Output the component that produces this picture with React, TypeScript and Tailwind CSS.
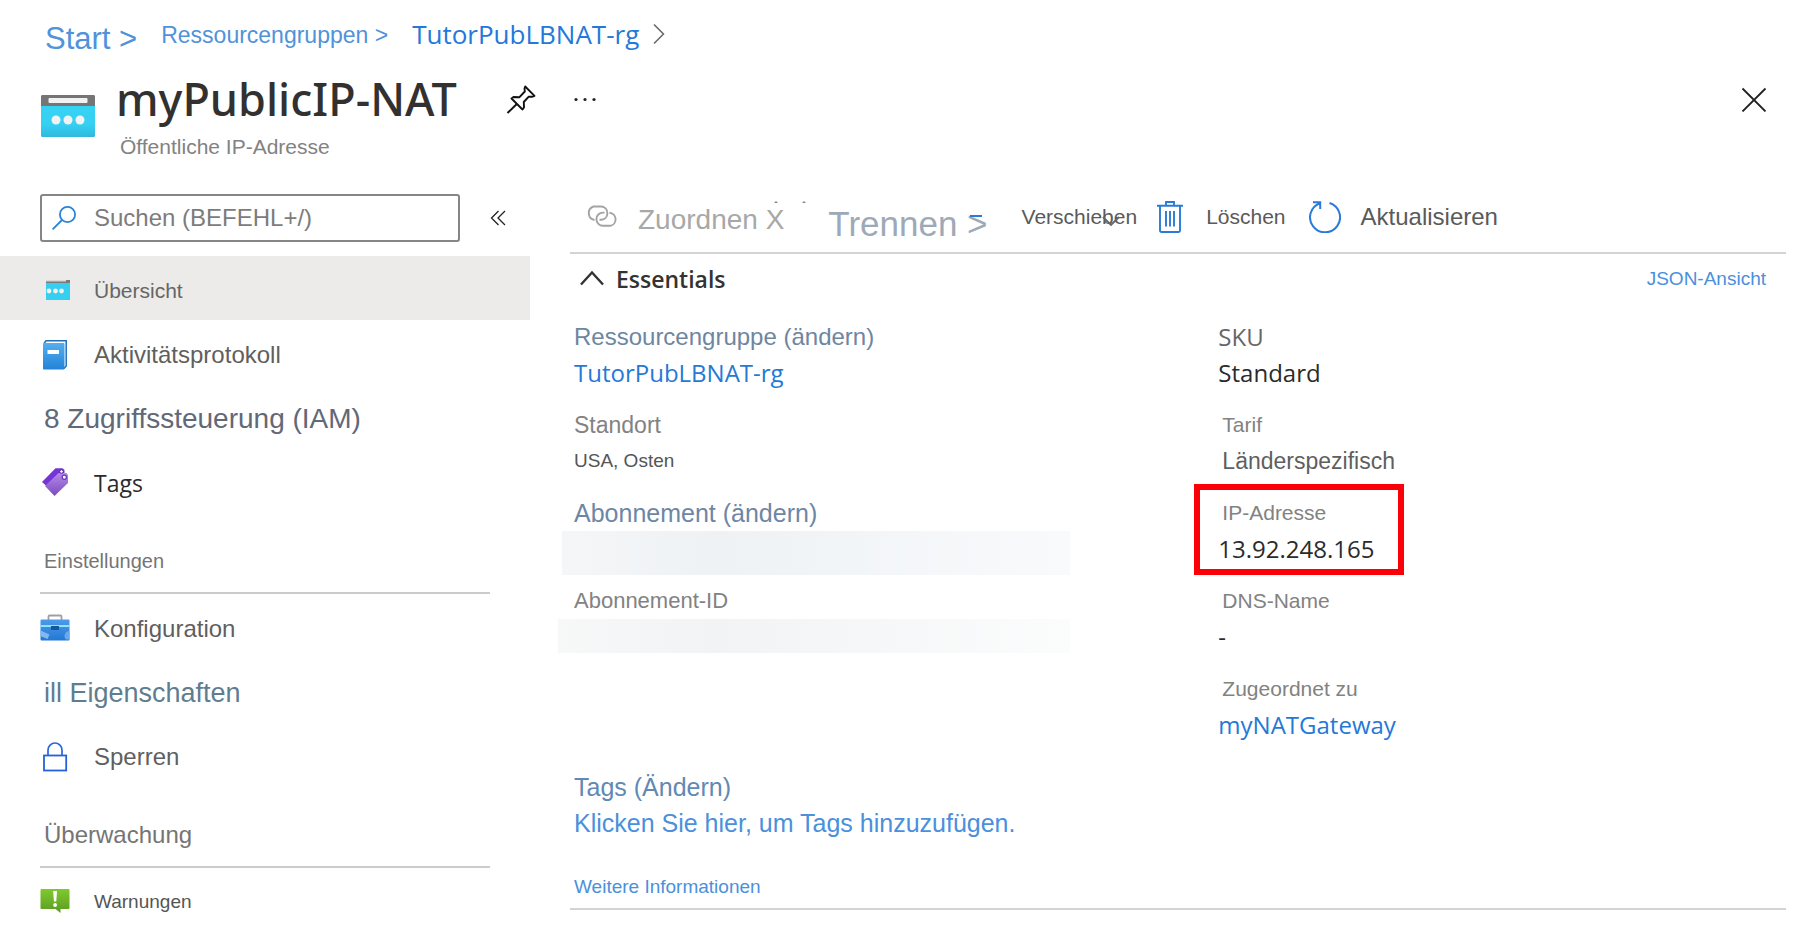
import React from "react";

const segoe = "font-['Open_Sans','Noto_Sans',sans-serif] font-medium";

function IpIcon({ className, viewBox }: { className: string; viewBox: string }) {
  return (
    <svg className={className} viewBox={viewBox} aria-hidden="true">
      <defs>
        <linearGradient id="ipBody" x1="0" y1="0" x2="0" y2="1">
          <stop offset="0" stopColor="#37d4f6" />
          <stop offset="0.7" stopColor="#35d0f2" />
          <stop offset="1" stopColor="#2fb9dc" />
        </linearGradient>
      </defs>
      <rect x="0" y="0" width="54" height="42" rx="1.5" fill="url(#ipBody)" />
      <path d="M1.5 0h51a1.5 1.5 0 0 1 1.5 1.5V11H0V1.500A1.500 1.500 0 0 1 1.500 0z" fill="#757575" />
      <rect x="7.500" y="3" width="39" height="5" rx="1" fill="#f2f2f2" />
      <circle cx="15" cy="25" r="4.500" fill="#f2f2f2" />
      <circle cx="27" cy="25" r="4.500" fill="#f2f2f2" />
      <circle cx="39" cy="25" r="4.500" fill="#f2f2f2" />
    </svg>
  );
}

function OverviewIcon() {
  return (
    <svg className="size-[30px]" viewBox="0 0 30 30" aria-hidden="true">
      <rect x="6" y="4" width="24" height="20" fill="#35cff1" />
      <rect x="6" y="4" width="24" height="3" fill="#7a7a7a" />
      <rect x="6" y="4" width="20" height="1.500" fill="#d9d9d9" />
      <circle cx="9" cy="15" r="2.400" fill="#f2f2f2" />
      <circle cx="15.500" cy="15" r="2.400" fill="#f2f2f2" />
      <circle cx="21.500" cy="15" r="2.400" fill="#f2f2f2" />
    </svg>
  );
}

function BookIcon() {
  return (
    <svg className="size-[30px]" viewBox="0 1 30 30" aria-hidden="true">
      <defs>
        <linearGradient id="book" x1="0" y1="0" x2="0" y2="1">
          <stop offset="0" stopColor="#54aef0" />
          <stop offset="1" stopColor="#2283d8" />
        </linearGradient>
      </defs>
      <path d="M4 4.500L6 1.800H26.200V27L24 29.500" fill="#ffffff" stroke="#1f6fb8" strokeWidth="1.500" />
      <rect x="3" y="4" width="21.500" height="26.500" rx="1" fill="url(#book)" />
      <rect x="7.500" y="11" width="11.500" height="4" fill="#ffffff" />
    </svg>
  );
}

function TagIcon() {
  return (
    <svg className="size-[30px]" viewBox="0 1 30 30" aria-hidden="true">
      <defs>
        <linearGradient id="tag" x1="0" y1="0" x2="0" y2="1">
          <stop offset="0" stopColor="#b58ae6" />
          <stop offset="1" stopColor="#7a4bc0" />
        </linearGradient>
      </defs>
      <path d="M2 15L15.500 1.200H22.500L24.500 3V8L7 19.500z" fill="#7534d6" />
      <path d="M5 19L18.500 6H26.500L28 8V16L14.500 29z" fill="url(#tag)" />
      <circle cx="21.500" cy="4.500" r="1.800" fill="#ffffff" stroke="#4c1fa0" strokeWidth="1" />
      <circle cx="24.300" cy="10.300" r="2.100" fill="#ffffff" stroke="#6a35c0" strokeWidth="1.300" />
    </svg>
  );
}

function ToolboxIcon() {
  return (
    <svg className="size-[30px]" viewBox="0 1 30 30" aria-hidden="true">
      <defs>
        <linearGradient id="toolbox" x1="0" y1="0" x2="0" y2="1">
          <stop offset="0" stopColor="#4c9bec" />
          <stop offset="1" stopColor="#2478d2" />
        </linearGradient>
      </defs>
      <path d="M8.500 7V3.500a1 1 0 0 1 1-1h11a1 1 0 0 1 1 1V7" fill="none" stroke="#a0a0a0" strokeWidth="1.800" />
      <rect x="0.500" y="6.500" width="29" height="21" rx="1" fill="url(#toolbox)" />
      <rect x="0.500" y="12" width="29" height="2" fill="#8fe3fa" />
      <rect x="11" y="13" width="8" height="4" fill="#17559c" />
      <path d="M0.500 17.500L9.500 21.500L7.500 26L0.500 23z" fill="#83b9f2" />
      <path d="M29.500 18A5 5 0 0 0 26 26.500H29.500z" fill="#6aa9ee" />
    </svg>
  );
}

function LockIcon() {
  return (
    <svg className="size-[30px]" viewBox="0 1 30 30" aria-hidden="true">
      <path d="M8 15V9a7 7 0 0 1 14 0V15" fill="none" stroke="#2a66dc" strokeWidth="1.700" />
      <rect x="4" y="14.500" width="22.200" height="15" fill="#ffffff" stroke="#2462da" strokeWidth="1.800" />
    </svg>
  );
}

function AlertIcon() {
  return (
    <svg className="size-[30px]" viewBox="0 0 30 30" aria-hidden="true">
      <defs>
        <linearGradient id="alert" x1="0" y1="0" x2="0" y2="1">
          <stop offset="0" stopColor="#7ecb2c" />
          <stop offset="1" stopColor="#5b9a24" />
        </linearGradient>
      </defs>
      <path d="M1.500 2H28.500a1 1 0 0 1 1 1V21a1 1 0 0 1-1 1H20.500V26L15.500 22H1.500a1 1 0 0 1-1-1V3a1 1 0 0 1 1-1z" fill="url(#alert)" />
      <path d="M13.200 4H17L16.300 14.500H13.900z" fill="#ffffff" />
      <circle cx="15.100" cy="18" r="1.900" fill="#ffffff" />
    </svg>
  );
}

type NavItem = { label: string; icon?: React.ReactNode; text: string; selected?: boolean; row?: string };

function NavRow({ item }: { item: NavItem }) {
  return (
    <li>
      <a
        href="#"
        aria-current={item.selected ? "page" : undefined}
        className={`flex items-center gap-6 ${item.row ?? "h-16 pt-1.5"} ${item.icon ? "pl-10" : "pl-11"} ${item.selected ? "bg-[#ecebe9]" : ""}`}
      >
        {item.icon}
        <span className={`whitespace-nowrap ${item.text}`}>{item.label}</span>
      </a>
    </li>
  );
}

function NavHeading({ children, text }: { children: string; text: string }) {
  return (
    <h2 className={`ml-10 mr-10 flex h-[82px] items-end border-b-2 border-[#cbcbcb] pb-[17px] pl-1 leading-7 text-[#757575] ${text}`}>
      {children}
    </h2>
  );
}

const general: NavItem[] = [
  { label: "Übersicht", icon: <OverviewIcon />, text: "text-[21px] text-[#666]", selected: true },
  { label: "Aktivitätsprotokoll", icon: <BookIcon />, text: "text-[24px] text-[#5f5f5f]" },
  { label: "8 Zugriffssteuerung (IAM)", text: "text-[28px] text-[#626878]" },
  { label: "Tags", icon: <TagIcon />, text: `text-[23px] text-[#2b2b2b] ${segoe}` },
];
const settings: NavItem[] = [
  { label: "Konfiguration", icon: <ToolboxIcon />, text: "text-[24px] text-[#5f5f5f]" },
  { label: "ill Eigenschaften", text: "text-[27px] text-[#5f7d8f]" },
  { label: "Sperren", icon: <LockIcon />, text: "text-[24px] text-[#5f5f5f]" },
];
const monitoring: NavItem[] = [
  { label: "Warnungen", icon: <AlertIcon />, text: "text-[19px] text-[#555]", row: "h-14 pt-3" },
];

function Sidebar() {
  return (
    <aside className="w-[530px] shrink-0">
      <div className="flex items-center pl-10">
        <div className="relative">
          <svg className="absolute left-3 top-3 size-6" viewBox="0 0 24 24" fill="none" stroke="#2b83d8" strokeWidth="1.800" aria-hidden="true">
            <circle cx="15.500" cy="8.500" r="7.600" />
            <path d="M10 14L0.600 23.400" />
          </svg>
          <input
            type="search"
            aria-label="Suchen"
            placeholder="Suchen (BEFEHL+/)"
            className="h-12 w-[420px] rounded-[3px] border-2 border-[#868686] pl-[52px] pr-3 text-[24px] text-[#333] outline-none placeholder:text-[#7c7c7c]"
          />
        </div>
        <button type="button" aria-label="Menü einklappen" className="ml-7">
          <svg className="size-5" viewBox="0 0 20 20" fill="none" stroke="#222" strokeWidth="1.300" aria-hidden="true">
            <path d="M10.500 3L3.500 10L10.500 17M17 3L10 10L17 17" />
          </svg>
        </button>
      </div>
      <nav className="mt-[14px]">
        <ul>{general.map((i) => <NavRow key={i.label} item={i} />)}</ul>
        <NavHeading text="text-[20px]">Einstellungen</NavHeading>
        <ul>{settings.map((i) => <NavRow key={i.label} item={i} />)}</ul>
        <NavHeading text="text-[24px]">Überwachung</NavHeading>
        <ul>{monitoring.map((i) => <NavRow key={i.label} item={i} />)}</ul>
      </nav>
    </aside>
  );
}

function Toolbar() {
  return (
    <div role="toolbar" className="flex h-[60px] items-start whitespace-nowrap border-b-2 border-[#d4d4d4] pl-4 pt-[7px] leading-8 text-[#5a5a5a]">
      <button type="button" className="relative flex items-start gap-5 text-[28px] leading-[38px] text-[#a8a8a8]">
        <svg className="h-8 w-8" viewBox="0 0 32 32" fill="none" stroke="#a3a3a3" strokeWidth="1.900" aria-hidden="true">
          <path d="M8.500 19A7 7 0 0 1 7.500 5.500H15.500A6.700 6.700 0 0 1 15.500 18.800H13.500" />
          <path d="M23.500 11.800A6.600 6.600 0 0 1 24.500 24.800H17A6.600 6.600 0 0 1 17 11.600H18.500" />
        </svg>
        Zuordnen X
        <svg className="absolute left-[188px] top-0 h-1 w-8" viewBox="0 0 32 4" fill="#8a8a8a" aria-hidden="true">
          <path d="M0 2L2 0L4 2zM28 2L30 0L32 2z" />
        </svg>
      </button>
      <button type="button" className="relative ml-11 text-[35px] leading-[46px] text-[#9ea9b8]">
        Trennen &gt;
        <span className="absolute right-1.5 top-[14px] h-0.5 w-3 bg-[#2b7bd6]" />
      </button>
      <button type="button" className="relative ml-[34px] text-[21px]">
        Verschieben
        <svg className="absolute left-20 top-[14px] h-3 w-[18px]" viewBox="0 0 18 12" fill="none" stroke="#666" strokeWidth="1.800" aria-hidden="true">
          <path d="M1 2L9 10L17 2" />
        </svg>
      </button>
      <button type="button" className="ml-5 flex items-start gap-[23px] text-[21px]">
        <svg className="h-8 w-[26px]" viewBox="0 0 26 32" fill="none" stroke="#2b7bd6" strokeWidth="1.900" aria-hidden="true">
          <path d="M0 4.800H26M3 4.800V29.500a1.500 1.500 0 0 0 1.500 1.500H21.500a1.500 1.500 0 0 0 1.500-1.500V4.800M9 4.500V1H17V4.500M9 10V25.500M13 10V25.500M17 10V25.500" />
        </svg>
        Löschen
      </button>
      <button type="button" className="ml-[23px] flex items-start gap-5 text-[24px]">
        <svg className="size-8" viewBox="0 0 32 32" fill="none" stroke="#2b7bd6" strokeWidth="2" aria-hidden="true">
          <path d="M20.500 2A15 15 0 1 1 11 2.200M4 1.200H11.200V8" />
        </svg>
        Aktualisieren
      </button>
    </div>
  );
}

const label = "block pl-1 text-[21px] text-[#828282]";

function Field({ children }: { children: React.ReactNode }) {
  return <div className="relative h-[88px] whitespace-nowrap leading-9">{children}</div>;
}

function Essentials() {
  return (
    <section>
      <div className="flex items-center justify-between pl-[10px] pr-5 pt-[9px] leading-8">
        <button type="button" aria-expanded="true" className="flex items-center gap-3 font-['Open_Sans','Noto_Sans',sans-serif] text-[23px] font-semibold text-[#333]">
          <svg className="h-5 w-6" viewBox="0 0 24 20" fill="none" stroke="#333" strokeWidth="2.400" aria-hidden="true">
            <path d="M1 15.500L12 3.500L23 15.500" />
          </svg>
          Essentials
        </button>
        <a href="#" className="text-[19px] text-[#4a90dc]">JSON-Ansicht</a>
      </div>

      <div className="mt-6 grid grid-cols-[53fr_47fr] pl-1">
        <dl>
          <Field>
            <dt className="text-[24px] text-[#6e869f]">Ressourcengruppe (<a href="#">ändern</a>)</dt>
            <dd><a href="#" className={`text-[24px] text-[#2479d8] ${segoe}`}>TutorPubLBNAT-rg</a></dd>
          </Field>
          <Field>
            <dt className="text-[23px] text-[#828282]">Standort</dt>
            <dd className="text-[19px] text-[#555]">USA, Osten</dd>
          </Field>
          <Field>
            <dt className="text-[25px] text-[#6e86a5]">Abonnement (<a href="#">ändern</a>)</dt>
            <dd className="-ml-3 h-11 w-[508px] bg-linear-to-r from-[#f5f6f7] via-[#eef2f5] via-30% to-[#f9fafc]" />
          </Field>
          <Field>
            <dt className="text-[22px] text-[#828282]">Abonnement-ID</dt>
            <dd className="-ml-4 h-[34px] w-[512px] bg-linear-to-r from-[#f7f8f8] via-[#f2f3f5] via-30% to-[#fbfcfc]" />
          </Field>
        </dl>
        <dl className="pl-0.5 text-[24px]">
          <Field>
            <dt className="font-['Open_Sans','Noto_Sans',sans-serif] text-[#666]">SKU</dt>
            <dd className={`text-[#2b2b2b] ${segoe}`}>Standard</dd>
          </Field>
          <Field>
            <dt className={label}>Tarif</dt>
            <dd className="pl-1 text-[23px] text-[#5f5f5f]">Länderspezifisch</dd>
          </Field>
          <Field>
            <span className="absolute -left-6 -top-[11px] h-[91px] w-[210px] border-[6px] border-[#fb0007]" />
            <dt className={label}>IP-Adresse</dt>
            <dd className={`text-[#2b2b2b] ${segoe}`}>13.92.248.165</dd>
          </Field>
          <Field>
            <dt className={label}>DNS-Name</dt>
            <dd className={`text-[#2b2b2b] ${segoe}`}>-</dd>
          </Field>
          <Field>
            <dt className={label}>Zugeordnet zu</dt>
            <dd><a href="#" className={`text-[#2479d8] ${segoe}`}>myNATGateway</a></dd>
          </Field>
        </dl>
      </div>

      <div className="border-b-2 border-[#d4d4d4] pb-[3px] pl-1 pt-[10px] text-[25px] leading-9">
        <p className="text-[#6089b3]">Tags (<a href="#">Ändern</a>)</p>
        <p><a href="#" className="text-[#4a90dc]">Klicken Sie hier, um Tags hinzuzufügen.</a></p>
        <p className="mt-7 text-[19px]"><a href="#" className="text-[#4a90dc]">Weitere Informationen</a></p>
      </div>
    </section>
  );
}

export default function App() {
  return (
    <div className="bg-white font-['Liberation_Sans',Arial,sans-serif]">
      <nav aria-label="Breadcrumb" className="flex items-start gap-6 whitespace-nowrap pl-[45px] pt-[18px] leading-8 text-[#4f93da]">
        <a href="#" className="text-[31px] leading-[42px]">Start &gt;</a>
        <a href="#" className="text-[23px] leading-[34px]">Ressourcengruppen &gt;</a>
        <div className="flex items-center gap-3.5">
          <a href="#" className={`text-[26px] text-[#2479d8] ${segoe}`}>TutorPubLBNAT-rg</a>
          <svg className="h-5 w-3" viewBox="0 0 12 20" fill="none" stroke="#666" strokeWidth="1.500" aria-hidden="true">
            <path d="M1 0.500L10.500 10L1 19.500" />
          </svg>
        </div>
      </nav>

      <header className="mt-[11px] flex items-start pl-[41px] pr-8">
        <IpIcon className="mt-6 h-[42px] w-[54px]" viewBox="0 0 54 42" />
        <div className="ml-[21px] whitespace-nowrap">
          <div className="flex h-14 items-center">
            <h1 className="font-['Noto_Sans','Open_Sans',sans-serif] text-[45px] font-medium leading-[56px] text-[#323130]">myPublicIP-NAT</h1>
            <button type="button" aria-label="Anheften" className="ml-12">
              <svg className="size-8" viewBox="0 0 32 32" fill="none" stroke="#111" strokeWidth="1.900" strokeLinejoin="round" aria-hidden="true">
                <path d="M20.200 3.500L29.500 12.800L27 13.800H23.500L18.800 19L19 24.500L17.500 26.500L6.500 15.500L8.500 14L14.500 14.200L19.800 8.500L19.500 5.500z" />
                <path d="M11.800 21L2.500 30" />
              </svg>
            </button>
            <button type="button" aria-label="Weitere Aktionen" className="ml-9">
              <svg className="size-6" viewBox="0 0 24 24" fill="#222" aria-hidden="true">
                <circle cx="3" cy="12.500" r="1.600" />
                <circle cx="12" cy="12.500" r="1.600" />
                <circle cx="21" cy="12.500" r="1.600" />
              </svg>
            </button>
          </div>
          <p className="mt-2 pl-1 text-[21px] leading-6 text-[#828282]">Öffentliche IP-Adresse</p>
        </div>
        <button type="button" aria-label="Schließen" className="ml-auto flex h-14 w-16 items-center justify-center">
          <svg className="size-[26px]" viewBox="0 0 26 26" fill="none" stroke="#222" strokeWidth="1.800" aria-hidden="true">
            <path d="M1.500 2.500L24.500 25.500M24.500 2.500L1.500 25.500" />
          </svg>
        </button>
      </header>

      <div className="mt-[35px] flex items-start">
        <Sidebar />
        <main className="min-w-0 flex-1 pl-10 pr-8">
          <Toolbar />
          <Essentials />
        </main>
      </div>
    </div>
  );
}
